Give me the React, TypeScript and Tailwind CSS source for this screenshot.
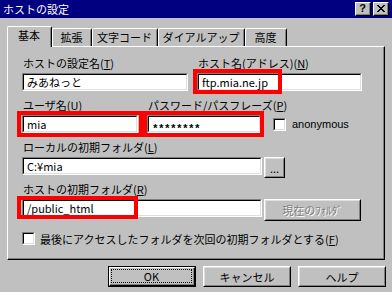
import React from "react";

function Field({ w, value }: { w: string; value?: React.ReactNode }) {
  return (
    <div className={`h-[18px] shrink-0 border border-t-[#808080] border-l-[#808080] border-b-white border-r-white ${w}`}>
      <div className="h-full border border-t-black border-l-black border-b-[#dfdfdf] border-r-[#dfdfdf] bg-white pl-[3px] text-[11px] leading-[14px] text-black whitespace-nowrap">
        {value}
      </div>
    </div>
  );
}

function Label({ children }: { children: React.ReactNode }) {
  return <div className="h-[14px] pl-[1px] mb-[3px] text-[11px] leading-[14px] text-black whitespace-nowrap">{children}</div>;
}

function Check() {
  return (
    <div className="w-[13px] h-[13px] shrink-0 border border-t-[#808080] border-l-[#808080] border-b-white border-r-white">
      <div className="h-full border border-t-black border-l-black border-b-[#dfdfdf] border-r-[#dfdfdf] bg-white" />
    </div>
  );
}

function Btn({ w, h, children, disabled }: { w: string; h: string; children: React.ReactNode; disabled?: boolean }) {
  return (
    <div className={`shrink-0 flex border border-t-white border-l-white border-r-black border-b-black ${w} ${h}`}>
      <div className="flex-1 flex items-center justify-center border border-t-[#dfdfdf] border-l-[#dfdfdf] border-r-[#808080] border-b-[#808080] bg-[#c0c0c0]">
        <span className={disabled ? "text-[11px] leading-[14px] text-[#808080] [text-shadow:1px_1px_0_#ffffff]" : "text-[11px] leading-[14px] text-black"}>
          {children}
        </span>
      </div>
    </div>
  );
}

export default function App() {
  return (
    <div className="relative w-[392px] h-[292px] overflow-hidden bg-[#c0c0c0] flex flex-col font-['Noto_Sans_CJK_JP',sans-serif] text-black">
      {/* title bar */}
      <div className="h-[18px] shrink-0 bg-[#000080] flex items-center justify-between pl-[3px] pr-[3px]">
        <span className="text-white text-[11px] leading-[14px]">ホストの設定</span>
        <div className="flex gap-[2px]">
          <div className="w-[16px] h-[14px] flex border border-t-white border-l-white border-r-black border-b-black">
            <div className="flex-1 flex items-center justify-center border-r border-b border-r-[#808080] border-b-[#808080] bg-[#c0c0c0]">
              <span className="font-['Liberation_Sans',sans-serif] font-bold text-[11px] leading-[11px] text-black">?</span>
            </div>
          </div>
          <div className="w-[16px] h-[14px] flex border border-t-white border-l-white border-r-black border-b-black">
            <div className="flex-1 flex items-center justify-center border-r border-b border-r-[#808080] border-b-[#808080] bg-[#c0c0c0]">
              <svg width="8" height="7" viewBox="0 0 8 7" shapeRendering="crispEdges">
                <path d="M0 0h2v1h-2zM6 0h2v1h-2zM1 1h2v1h-2zM5 1h2v1h-2zM2 2h4v1h-4zM3 3h2v1h-2zM2 4h4v1h-4zM1 5h2v1h-2zM5 5h2v1h-2zM0 6h2v1h-2zM6 6h2v1h-2z" fill="#000" />
              </svg>
            </div>
          </div>
        </div>
      </div>

      <div className="flex flex-col px-[7px] pt-[8px]">
        {/* tabs */}
        <div className="flex items-end h-[21px] -mb-[1px]">
          <div className="relative z-10 w-[45px] h-[21px] bg-[#c0c0c0] border-l border-t border-r border-l-white border-t-white border-r-black rounded-t-[2px] pt-[1px] flex justify-center">
            <div className="w-full h-full border-r border-r-[#808080] flex justify-center text-[11px] leading-[14px]">基本</div>
          </div>
          <div className="w-[40px] h-[19px] border-l border-t border-r border-l-white border-t-white border-r-black rounded-t-[2px] pt-[1px]">
            <div className="w-full h-full border-r border-r-[#808080] flex justify-center text-[11px] leading-[14px]">拡張</div>
          </div>
          <div className="w-[66px] h-[19px] border-l border-t border-r border-l-white border-t-white border-r-black rounded-t-[2px] pt-[1px]">
            <div className="w-full h-full border-r border-r-[#808080] flex justify-center text-[11px] leading-[14px]">文字コード</div>
          </div>
          <div className="w-[87px] h-[19px] border-l border-t border-r border-l-white border-t-white border-r-black rounded-t-[2px] pt-[1px]">
            <div className="w-full h-full border-r border-r-[#808080] flex justify-center text-[11px] leading-[14px]">ダイアルアップ</div>
          </div>
          <div className="w-[42px] h-[19px] border-l border-t border-r border-l-white border-t-white border-r-black rounded-t-[2px] pt-[1px]">
            <div className="w-full h-full border-r border-r-[#808080] flex justify-center text-[11px] leading-[14px]">高度</div>
          </div>
        </div>

        {/* panel */}
        <div className="h-[214px] flex border border-t-white border-l-white border-r-black border-b-black">
          <div className="flex-1 flex flex-col border-r border-b border-r-[#808080] border-b-[#808080] pl-[14px] pt-[9px]">
            {/* row 1 */}
            <div className="flex gap-[9px]">
              <div className="flex flex-col w-[166px]">
                <Label>ホストの設定名(<u>T</u>)</Label>
                <Field w="w-[166px]" value="みあねっと" />
              </div>
              <div className="flex flex-col w-[165px]">
                <Label>ホスト名(アドレス)(<u>N</u>)</Label>
                <Field w="w-[165px]" value="ftp.mia.ne.jp" />
              </div>
            </div>
            {/* row 2 */}
            <div className="flex items-end gap-[9px] mt-[7px]">
              <div className="flex flex-col w-[116px]">
                <Label>ユーザ名(<u>U</u>)</Label>
                <Field w="w-[116px]" value="mia" />
              </div>
              <div className="flex flex-col w-[114px]">
                <Label>パスワード/パスフレーズ(<u>P</u>)</Label>
                <Field
                  w="w-[114px]"
                  value={
                    <span className="inline-block translate-y-[3px] font-['Liberation_Mono',monospace] font-bold text-[11px] tracking-[-0.6px] leading-[14px]">********</span>
                  }
                />
              </div>
              <div className="flex items-center h-[18px] ml-[3px]">
                <Check />
                <span className="ml-[6px] font-['Liberation_Sans',sans-serif] text-[11px] leading-[14px]">anonymous</span>
              </div>
            </div>
            {/* row 3 */}
            <div className="flex flex-col mt-[7px]">
              <Label>ローカルの初期フォルダ(<u>L</u>)</Label>
              <div className="flex items-start h-[18px] gap-[2px]">
                <Field w="w-[240px]" value="C:¥mia" />
                <Btn w="w-[21px]" h="h-[21px]">...</Btn>
              </div>
            </div>
            {/* row 4 */}
            <div className="flex flex-col mt-[7px]">
              <Label>ホストの初期フォルダ(<u>R</u>)</Label>
              <div className="flex items-start h-[18px] gap-[2px]">
                <Field w="w-[240px]" value="/public_html" />
                <Btn w="w-[97px]" h="h-[22px]" disabled>現在のﾌｫﾙﾀﾞ</Btn>
              </div>
            </div>
            {/* checkbox row */}
            <div className="flex items-center h-[15px] mt-[14px]">
              <Check />
              <span className="ml-[5px] text-[11px] leading-[14px] whitespace-nowrap">最後にアクセスしたフォルダを次回の初期フォルダとする(<u>F</u>)</span>
            </div>
          </div>
        </div>

        {/* bottom buttons */}
        <div className="flex justify-end gap-[7px] mt-[6px] -mr-[1px]">
          <div className="w-[88px] h-[21px] flex border border-black">
            <div className="flex-1 flex border border-t-white border-l-white border-r-black border-b-black">
              <div className="flex-1 flex p-[1px] border-r border-b border-r-[#808080] border-b-[#808080]">
                <div className="flex-1 flex items-center justify-center border border-dotted border-black text-[11px] leading-[14px]">OK</div>
              </div>
            </div>
          </div>
          <Btn w="w-[88px]" h="h-[21px]">キャンセル</Btn>
          <Btn w="w-[88px]" h="h-[21px]">ヘルプ</Btn>
        </div>
      </div>

      {/* red annotation boxes */}
      <div className="absolute left-[193px] top-[69px] w-[89px] h-[25px] border-4 border-[#ff0000]" />
      <div className="absolute left-[17px] top-[111px] w-[126px] h-[26px] border-4 border-[#ff0000]" />
      <div className="absolute left-[143px] top-[111px] w-[121px] h-[26px] border-4 border-[#ff0000]" />
      <div className="absolute left-[17px] top-[196px] w-[121px] h-[23px] border-4 border-[#ff0000]" />
    </div>
  );
}
